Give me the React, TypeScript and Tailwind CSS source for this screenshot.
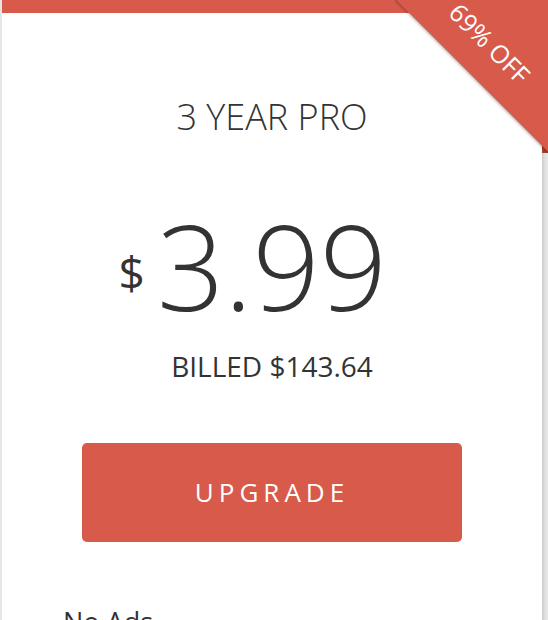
export default function App() {
  return (
    <div
      className="h-[620px] w-[548px] overflow-hidden bg-[#e6e6e6] pl-[2px] pr-[6px]"
      style={{ fontFamily: '"Open Sans", "Liberation Sans", sans-serif' }}
    >
      <div className="relative h-[700px] border-t-[13px] border-[#d75a4a] bg-white text-[#333] shadow-[2px_0_3px_rgba(0,0,0,0.12)]">
        {/* fold behind ribbon */}
        <div className="absolute right-[-6px] top-[127px] h-[13px] w-[6px] bg-[#a8402f]" />
        {/* corner ribbon */}
        <div className="absolute right-[-6px] top-[-13px] h-[153px] w-[153px] overflow-hidden">
          <div className="absolute left-[-38px] top-[-34px] flex h-[120px] w-[300px] rotate-45 items-end justify-center bg-[#d75a4a] pb-[23px] shadow-[0_1px_3px_rgba(0,0,0,0.3)]">
            <span className="text-[25px] leading-none text-white">69% OFF</span>
          </div>
        </div>

        <div className="flex flex-col items-center pt-[86px]">
          <h2 className="text-[36px] font-light leading-none">3 YEAR PRO</h2>

          <div className="relative mt-[72px]">
            <span className="absolute right-full top-[42px] mr-[12px] text-[46px] font-normal leading-none">$</span>
            <span className="block text-[118px] font-[350] leading-none">3.99</span>
          </div>

          <p className="mt-[27px] text-[28px] leading-none">BILLED $143.64</p>

          <button className="mt-[63px] flex h-[99px] w-[380px] items-center justify-center rounded-[5px] bg-[#d75a4a] text-[26px] tracking-[5px] text-white">
            UPGRADE
          </button>
        </div>

        <ul className="mt-[66px] pl-[61px] text-[27px] leading-none">
          <li>No Ads</li>
        </ul>
      </div>
    </div>
  );
}
